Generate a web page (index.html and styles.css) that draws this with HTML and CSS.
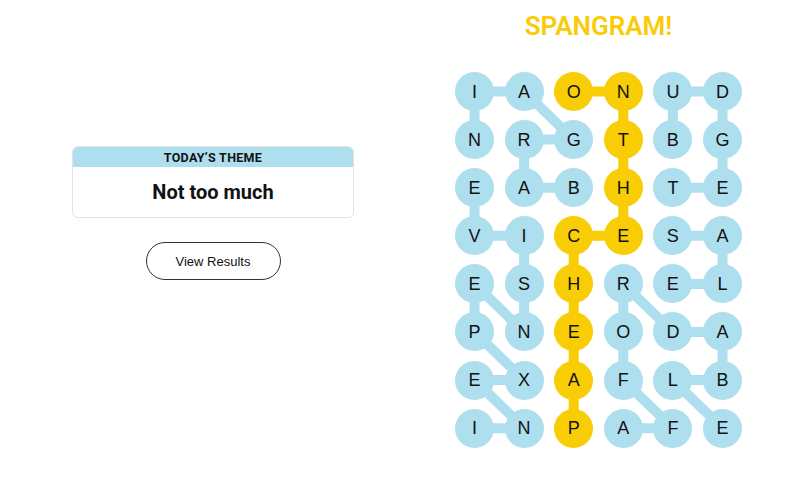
FILE: index.html
```
<!DOCTYPE html>
<html lang="en">
<head>
<meta charset="utf-8">
<title>Strands</title>
<link rel="stylesheet" href="styles.css">
</head>
<body>
<main class="page">
  <section class="side">
    <div class="theme-card">
      <h2 class="theme-label">TODAY’S THEME</h2>
      <p class="theme-title">Not too much</p>
    </div>
    <button class="results-btn">View Results</button>
  </section>
  <section class="board">
    <h1 class="hint">SPANGRAM!</h1>
    <div class="grid-wrap">
      <svg class="links" width="287" height="376" viewBox="0 0 287 376" aria-hidden="true">
        <g fill="none" stroke-width="10" stroke-linejoin="round">
          <polyline class="found" points="118.7,115.7 69.1,115.7 69.1,67.6 118.7,67.6 69.1,19.5 19.5,19.5 19.5,67.6"/>
          <polyline class="found" points="19.5,356.2 69.1,356.2 19.5,308.1 69.1,308.1 19.5,260 19.5,211.9 69.1,260 69.1,211.9 69.1,163.8 19.5,163.8 19.5,115.7"/>
          <polyline class="found" points="217.9,67.6 217.9,19.5 267.5,19.5 267.5,67.6 267.5,115.7 217.9,115.7"/>
          <polyline class="found" points="217.9,163.8 267.5,163.8 267.5,211.9 217.9,211.9"/>
          <polyline class="found" points="168.3,356.2 217.9,356.2 168.3,308.1 168.3,260 168.3,211.9 217.9,260 267.5,260 267.5,308.1 217.9,308.1 267.5,356.2"/>
          <polyline class="span" points="118.7,19.5 168.3,19.5 168.3,67.6 168.3,115.7 168.3,163.8 118.7,163.8 118.7,211.9 118.7,260 118.7,308.1 118.7,356.2"/>
        </g>
      </svg>
      <div class="grid">
        <span class="cell">I</span><span class="cell">A</span><span class="cell y">O</span><span class="cell y">N</span><span class="cell">U</span><span class="cell">D</span>
        <span class="cell">N</span><span class="cell">R</span><span class="cell">G</span><span class="cell y">T</span><span class="cell">B</span><span class="cell">G</span>
        <span class="cell">E</span><span class="cell">A</span><span class="cell">B</span><span class="cell y">H</span><span class="cell">T</span><span class="cell">E</span>
        <span class="cell">V</span><span class="cell">I</span><span class="cell y">C</span><span class="cell y">E</span><span class="cell">S</span><span class="cell">A</span>
        <span class="cell">E</span><span class="cell">S</span><span class="cell y">H</span><span class="cell">R</span><span class="cell">E</span><span class="cell">L</span>
        <span class="cell">P</span><span class="cell">N</span><span class="cell y">E</span><span class="cell">O</span><span class="cell">D</span><span class="cell">A</span>
        <span class="cell">E</span><span class="cell">X</span><span class="cell y">A</span><span class="cell">F</span><span class="cell">L</span><span class="cell">B</span>
        <span class="cell">I</span><span class="cell">N</span><span class="cell y">P</span><span class="cell">A</span><span class="cell">F</span><span class="cell">E</span>
      </div>
    </div>
  </section>
</main>
</body>
</html>
```
FILE: styles.css
```
* { box-sizing: border-box; }
html, body { margin: 0; padding: 0; background: #fff; }
body {
  font-family: "Liberation Sans", Arial, sans-serif;
  color: #121212;
  width: 800px;
  height: 502px;
  overflow: hidden;
}
.page {
  display: flex;
  align-items: flex-start;
  padding-left: 72px;
}
.side {
  width: 282px;
  padding-top: 146px;
  display: flex;
  flex-direction: column;
  align-items: center;
}
.theme-card {
  width: 282px;
  height: 72px;
  border: 1px solid #e3e3e3;
  border-radius: 6px;
  overflow: hidden;
}
.theme-label {
  margin: 0;
  height: 20px;
  background: #aedfee;
  font-family: Roboto, "Liberation Sans", sans-serif;
  font-weight: 700;
  font-size: 12.5px;
  line-height: 21px;
  letter-spacing: 0.3px;
  text-align: center;
}
.theme-title {
  margin: 0;
  font-family: Roboto, "Liberation Sans", sans-serif;
  font-weight: 700;
  font-size: 20px;
  line-height: 50px;
  text-align: center;
}
.results-btn {
  margin-top: 24px;
  width: 135px;
  height: 38px;
  border: 1px solid #333;
  border-radius: 20px;
  background: #fff;
  font-family: "Liberation Sans", Arial, sans-serif;
  font-size: 13px;
  color: #121212;
  padding: 0;
}
.board {
  margin-left: 101px;
  width: 287px;
  display: flex;
  flex-direction: column;
  align-items: center;
}
.hint {
  margin: 10px 0 0;
  height: 32px;
  font-family: Roboto, "Liberation Sans", sans-serif;
  font-weight: 600;
  font-size: 26px;
  line-height: 32px;
  color: #f9cc07;
}
.grid-wrap {
  position: relative;
  margin-top: 30px;
  width: 287px;
}
.links {
  position: absolute;
  left: 0;
  top: 0;
}
.links .found { stroke: #aedfee; }
.links .span { stroke: #f9cd05; }
.grid {
  position: relative;
  display: grid;
  grid-template-columns: repeat(6, 39px);
  grid-auto-rows: 39px;
  column-gap: 10.6px;
  row-gap: 9.1px;
}
.cell {
  width: 39px;
  height: 39px;
  border-radius: 50%;
  background: #aedfee;
  display: flex;
  align-items: center;
  justify-content: center;
  font-family: "Liberation Sans", Arial, sans-serif;
  font-size: 18px;
  line-height: 1;
  color: #121212;
}
.cell.y { background: #f9cd05; }
```
